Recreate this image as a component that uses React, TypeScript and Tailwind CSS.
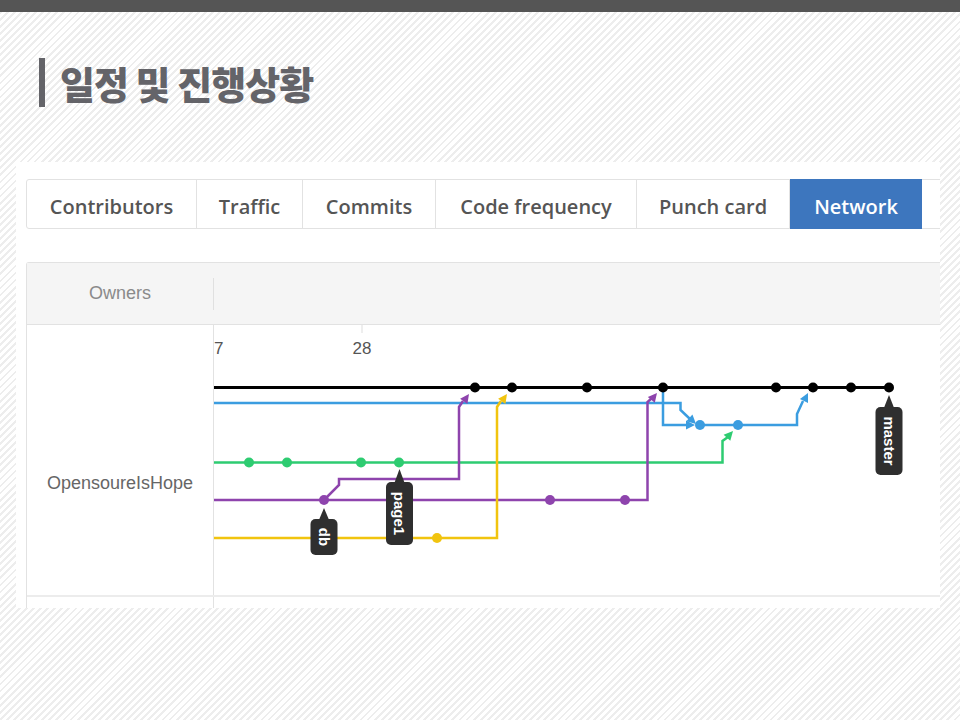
const TABS = [
  { label: 'Contributors', w: 'w-[170px]' },
  { label: 'Traffic', w: 'w-[106px]' },
  { label: 'Commits', w: 'w-[133px]' },
  { label: 'Code frequency', w: 'w-[201px]' },
  { label: 'Punch card', w: 'w-[153px]' },
]

const COLOR = {
  black: '#000000',
  blue: '#3b9de0',
  green: '#2ecc71',
  purple: '#8e44ad',
  yellow: '#f1c40f',
}

function Arrow({ x, y, fx, fy, c }: { x: number; y: number; fx: number; fy: number; c: string }) {
  const a = Math.atan2(y - fy, x - fx)
  const L = 9
  const W = 4.5
  const bx = x - L * Math.cos(a)
  const by = y - L * Math.sin(a)
  const px = -Math.sin(a)
  const py = Math.cos(a)
  return <polygon points={`${x},${y} ${bx + W * px},${by + W * py} ${bx - W * px},${by - W * py}`} fill={c} />
}

function Tag({ x, tip, top, bottom, text }: { x: number; tip: number; top: number; bottom: number; text: string }) {
  const mid = (top + bottom) / 2
  return (
    <g>
      <polygon points={`${x - 5.5},${top + 2} ${x},${tip} ${x + 5.5},${top + 2}`} fill="#2f2f2f" />
      <rect x={x - 13.5} y={top} width={27} height={bottom - top} rx={5} fill="#2f2f2f" />
      <text
        x={x}
        y={mid}
        transform={`rotate(90 ${x} ${mid})`}
        textAnchor="middle"
        dominantBaseline="central"
        fill="#ffffff"
        fontSize={15}
        fontWeight={700}
        fontFamily="'Liberation Sans', Arial, sans-serif"
      >
        {text}
      </text>
    </g>
  )
}

function Dots({ xs, y, c }: { xs: number[]; y: number; c: string }) {
  return <>{xs.map((x) => <circle key={x} cx={x} cy={y} r={5} fill={c} />)}</>
}

function NetworkGraph() {
  return (
    <svg width={726} height={271} viewBox="214 325 726 271" className="block">
      <text x={214} y={354} fontSize={17} fill="#555" fontFamily="'Liberation Sans', Arial, sans-serif">7</text>
      <line x1={362} y1={325} x2={362} y2={333} stroke="#dddddd" strokeWidth={1} />
      <text x={362} y={354} textAnchor="middle" fontSize={17} fill="#555" fontFamily="'Liberation Sans', Arial, sans-serif">28</text>

      <g fill="none" strokeWidth={2.5} strokeLinejoin="miter">
        <path d="M214 403 H680.5 V410 L690 419" stroke={COLOR.blue} />
        <path d="M663 387 V425 H688" stroke={COLOR.blue} />
        <path d="M700 425 H797 V414 L803 401" stroke={COLOR.blue} />
        <path d="M214 462.5 H722.5 V441 L728 437" stroke={COLOR.green} />
        <path d="M214 500 H647.5 V402 L652 398" stroke={COLOR.purple} />
        <path d="M324 500 L339 485 V479 H459 V407 L463 401" stroke={COLOR.purple} />
        <path d="M214 538 H497 V407 L501 401" stroke={COLOR.yellow} />
        <path d="M214 387.5 H889" stroke={COLOR.black} strokeWidth={2.8} />
      </g>

      <Arrow x={696} y={424} fx={683} fy={412} c={COLOR.blue} />
      <Arrow x={695} y={425} fx={680} fy={425} c={COLOR.blue} />
      <Arrow x={808} y={393} fx={798} fy={413} c={COLOR.blue} />
      <Arrow x={733} y={431} fx={723} fy={442} c={COLOR.green} />
      <Arrow x={657} y={393} fx={648} fy={404} c={COLOR.purple} />
      <Arrow x={469} y={394} fx={459} fy={408} c={COLOR.purple} />
      <Arrow x={507} y={394} fx={497} fy={408} c={COLOR.yellow} />

      <Dots xs={[475, 512, 587, 663, 776, 813, 851, 889]} y={387.5} c={COLOR.black} />
      <Dots xs={[700, 738]} y={425} c={COLOR.blue} />
      <Dots xs={[249, 287, 361, 399]} y={462.5} c={COLOR.green} />
      <Dots xs={[324, 550, 625]} y={500} c={COLOR.purple} />
      <Dots xs={[437]} y={538} c={COLOR.yellow} />

      <Tag x={324} tip={508} top={519} bottom={555} text="db" />
      <Tag x={399.5} tip={469} top={482} bottom={545} text="page1" />
      <Tag x={889} tip={395} top={407} bottom={475} text="master" />
    </svg>
  )
}

export default function App() {
  return (
    <div className="h-[720px] w-[960px] overflow-hidden bg-[repeating-linear-gradient(135deg,#ffffff_0px,#ffffff_3px,#ededed_3px,#ededed_5px)]">
      <div className="h-3 bg-[#555555]" />

      <div className="ml-[39px] mt-[46px] flex h-[49px] items-center">
        <div className="h-[49px] w-[6px] bg-[#646469]" />
        <h1 className="ml-[15px] font-['Noto_Sans_CJK_KR',sans-serif] text-[38px] leading-none font-black tracking-[-1px] text-[#646469]">
          일정 및 진행상황
        </h1>
      </div>

      <div className="mt-[55px] ml-4 h-[446px] w-[924px] overflow-hidden bg-white pt-[17px] pl-[10px]">
        <div className="flex h-[50px] w-[960px] rounded-l-[3px] border border-[#e2e2e2] font-['Open_Sans',sans-serif] text-[20px] font-semibold">
          {TABS.map((t) => (
            <div key={t.label} className={`${t.w} flex items-center justify-center border-r border-[#e2e2e2] pt-[6px] text-[#555555]`}>
              {t.label}
            </div>
          ))}
          <div className="-my-px flex w-[132px] items-center justify-center bg-[#3d76be] pt-[6px] text-white">Network</div>
        </div>

        <div className="mt-[33px] w-[960px] rounded-tl-[3px] border-t border-l border-[#e2e2e2] font-['Liberation_Sans',Arial,sans-serif] text-[18px]">
          <div className="flex h-[62px] items-center border-b border-[#e2e2e2] bg-[#f5f5f5]">
            <div className="w-[186px] text-center text-[#8a8a8a]">Owners</div>
            <div className="h-[32px] w-px bg-[#e0e0e0]" />
          </div>
          <div className="flex h-[272px] border-b-2 border-[#ececec]">
            <div className="flex w-[187px] items-center justify-center border-r border-[#e2e2e2] pt-[46px] text-[#666666]">
              OpensoureIsHope
            </div>
            <NetworkGraph />
          </div>
          <div className="flex h-[20px]">
            <div className="w-[187px] border-r border-[#e2e2e2]" />
          </div>
        </div>
      </div>
    </div>
  )
}
